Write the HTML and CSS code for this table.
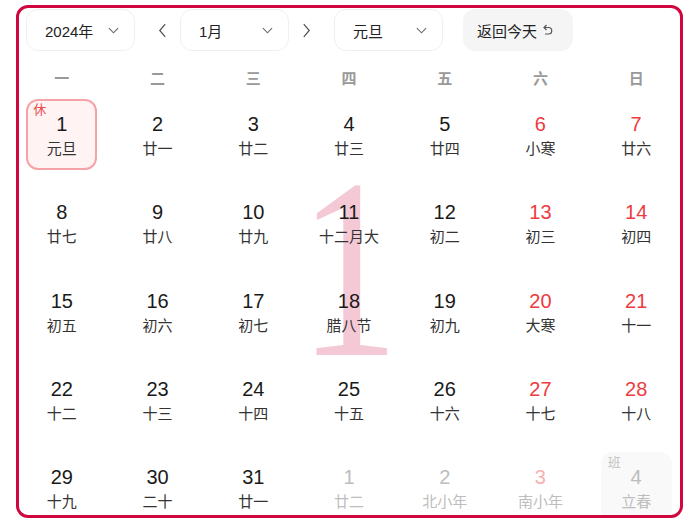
FILE: index.html
```html
<!DOCTYPE html>
<html lang="zh-CN">
<head>
  <meta charset="UTF-8" />
  <meta name="viewport" content="width=device-width, initial-scale=1.0">
  <title>万年历</title>
  <link rel="stylesheet" href="styles.css">
</head>
<body>

  <div class="calendar">
    <div class="watermark">1</div>

    <div class="toolbar">
      <div class="select year">
        <span>2024年</span>
        <svg class="chevron" viewBox="0 0 12 7"><polyline points="1,1 6,6 11,1" /></svg>
      </div>
      <div class="arrow prev">
        <svg viewBox="0 0 10 16"><polyline points="8,1 2,8 8,15" /></svg>
      </div>
      <div class="select month">
        <span>1月</span>
        <svg class="chevron" viewBox="0 0 12 7"><polyline points="1,1 6,6 11,1" /></svg>
      </div>
      <div class="arrow next">
        <svg viewBox="0 0 10 16"><polyline points="2,1 8,8 2,15" /></svg>
      </div>
      <div class="select festival">
        <span>元旦</span>
        <svg class="chevron" viewBox="0 0 12 7"><polyline points="1,1 6,6 11,1" /></svg>
      </div>
      <button class="today">
        返回今天
        <svg class="back" viewBox="0 0 10 12"><path d="M3.5 1 L1 3.5 L3.5 6 M1 3.5 H5.5 A3.2 3.2 0 0 1 5.5 10 H2" /></svg>
      </button>
    </div>

    <div class="weekdays">
      <div>一</div><div>二</div><div>三</div><div>四</div><div>五</div><div>六</div><div>日</div>
    </div>

    <div class="days">
      <div class="cell"><div class="day selected"><span class="tag rest">休</span><b>1</b><i>元旦</i></div></div>
      <div class="cell"><div class="day"><b>2</b><i>廿一</i></div></div>
      <div class="cell"><div class="day"><b>3</b><i>廿二</i></div></div>
      <div class="cell"><div class="day"><b>4</b><i>廿三</i></div></div>
      <div class="cell"><div class="day"><b>5</b><i>廿四</i></div></div>
      <div class="cell"><div class="day weekend"><b>6</b><i>小寒</i></div></div>
      <div class="cell"><div class="day weekend"><b>7</b><i>廿六</i></div></div>

      <div class="cell"><div class="day"><b>8</b><i>廿七</i></div></div>
      <div class="cell"><div class="day"><b>9</b><i>廿八</i></div></div>
      <div class="cell"><div class="day"><b>10</b><i>廿九</i></div></div>
      <div class="cell"><div class="day"><b>11</b><i>十二月大</i></div></div>
      <div class="cell"><div class="day"><b>12</b><i>初二</i></div></div>
      <div class="cell"><div class="day weekend"><b>13</b><i>初三</i></div></div>
      <div class="cell"><div class="day weekend"><b>14</b><i>初四</i></div></div>

      <div class="cell"><div class="day"><b>15</b><i>初五</i></div></div>
      <div class="cell"><div class="day"><b>16</b><i>初六</i></div></div>
      <div class="cell"><div class="day"><b>17</b><i>初七</i></div></div>
      <div class="cell"><div class="day"><b>18</b><i>腊八节</i></div></div>
      <div class="cell"><div class="day"><b>19</b><i>初九</i></div></div>
      <div class="cell"><div class="day weekend"><b>20</b><i>大寒</i></div></div>
      <div class="cell"><div class="day weekend"><b>21</b><i>十一</i></div></div>

      <div class="cell"><div class="day"><b>22</b><i>十二</i></div></div>
      <div class="cell"><div class="day"><b>23</b><i>十三</i></div></div>
      <div class="cell"><div class="day"><b>24</b><i>十四</i></div></div>
      <div class="cell"><div class="day"><b>25</b><i>十五</i></div></div>
      <div class="cell"><div class="day"><b>26</b><i>十六</i></div></div>
      <div class="cell"><div class="day weekend"><b>27</b><i>十七</i></div></div>
      <div class="cell"><div class="day weekend"><b>28</b><i>十八</i></div></div>

      <div class="cell"><div class="day"><b>29</b><i>十九</i></div></div>
      <div class="cell"><div class="day"><b>30</b><i>二十</i></div></div>
      <div class="cell"><div class="day"><b>31</b><i>廿一</i></div></div>
      <div class="cell"><div class="day other"><b>1</b><i>廿二</i></div></div>
      <div class="cell"><div class="day other"><b>2</b><i>北小年</i></div></div>
      <div class="cell"><div class="day other weekend"><b>3</b><i>南小年</i></div></div>
      <div class="cell"><div class="day other workday"><span class="tag work">班</span><b>4</b><i>立春</i></div></div>
    </div>
  </div>

</body>
</html>
```

FILE: styles.css
```css
* {
  box-sizing: border-box;
}
body {
  margin: 0;
  background: #fff;
  font-family: "Liberation Sans", "Noto Sans CJK SC", sans-serif;
  color: #1a1a1a;
}

.calendar {
  position: relative;
  width: 667px;
  height: 513px;
  margin: 5px 0 0 16px;
  border: 3px solid #d0073f;
  border-radius: 12px;
  overflow: hidden;
  background: #fff;
}

.watermark {
  position: absolute;
  left: 230px;
  top: 133px;
  width: 200px;
  text-align: center;
  font-family: "Liberation Serif", serif;
  font-size: 256px;
  line-height: 1;
  color: #f4c8d4;
  transform: scaleX(0.78);
  z-index: 0;
}

/* toolbar */
.toolbar {
  position: relative;
  display: flex;
  align-items: center;
  padding: 1px 0 0 7px;
  height: 43px;
}
.select {
  display: flex;
  align-items: center;
  justify-content: space-between;
  width: 109px;
  height: 42px;
  padding: 0 15px 0 18px;
  border: 1px solid #efefef;
  border-radius: 12px;
  font-size: 15px;
  color: #222;
}
.chevron {
  width: 11px;
  height: 7px;
  fill: none;
  stroke: #666;
  stroke-width: 1.2;
}
.arrow {
  width: 16px;
  display: flex;
  justify-content: center;
}
.arrow svg {
  width: 9px;
  height: 15px;
  fill: none;
  stroke: #555;
  stroke-width: 1.4;
}
.prev {
  margin: 0 10px 0 19px;
}
.next {
  margin: 0 20px 0 9px;
}
.festival {
  margin-right: 20px;
}
.today {
  display: flex;
  align-items: center;
  gap: 6px;
  width: 110px;
  height: 42px;
  padding: 0 0 0 14px;
  border: none;
  border-radius: 12px;
  background: #f5f5f5;
  font-family: inherit;
  font-size: 15px;
  color: #222;
}
.back {
  width: 10px;
  height: 12px;
  fill: none;
  stroke: #555;
  stroke-width: 1.2;
}

/* grid */
.weekdays,
.days {
  position: relative;
  display: grid;
  grid-template-columns: repeat(7, 1fr);
  width: 670px;
  margin-left: -5px;
}
.weekdays {
  height: 40px;
  margin-top: 6px;
  align-items: center;
  text-align: center;
  font-size: 15px;
  font-weight: bold;
  color: #999;
}
.days {
  grid-auto-rows: 88.33px;
}

.day {
  position: relative;
  display: flex;
  flex-direction: column;
  align-items: center;
  justify-content: center;
  width: 71px;
  height: 71px;
  margin: 2px auto 0;
  border: 2px solid transparent;
  border-radius: 12px;
}
.day b {
  font-weight: normal;
  font-size: 20px;
  line-height: 24px;
  margin-top: 2px;
}
.day i {
  font-style: normal;
  font-size: 15px;
  line-height: 20px;
  margin-top: 3px;
  color: #333;
}
.weekend b {
  color: #ee3b3f;
}
.selected {
  background: #fff3f3;
  border-color: #f5a3a6;
}
.other b,
.other i {
  color: #bdbdbd;
}
.other.weekend b {
  color: #f7b1b1;
}
.workday {
  background: #f9f9f9;
}
.tag {
  position: absolute;
  top: 2px;
  left: 5px;
  font-size: 13px;
  line-height: 14px;
}
.rest {
  color: #ea4a4a;
}
.work {
  color: #c4c4c4;
}
```
